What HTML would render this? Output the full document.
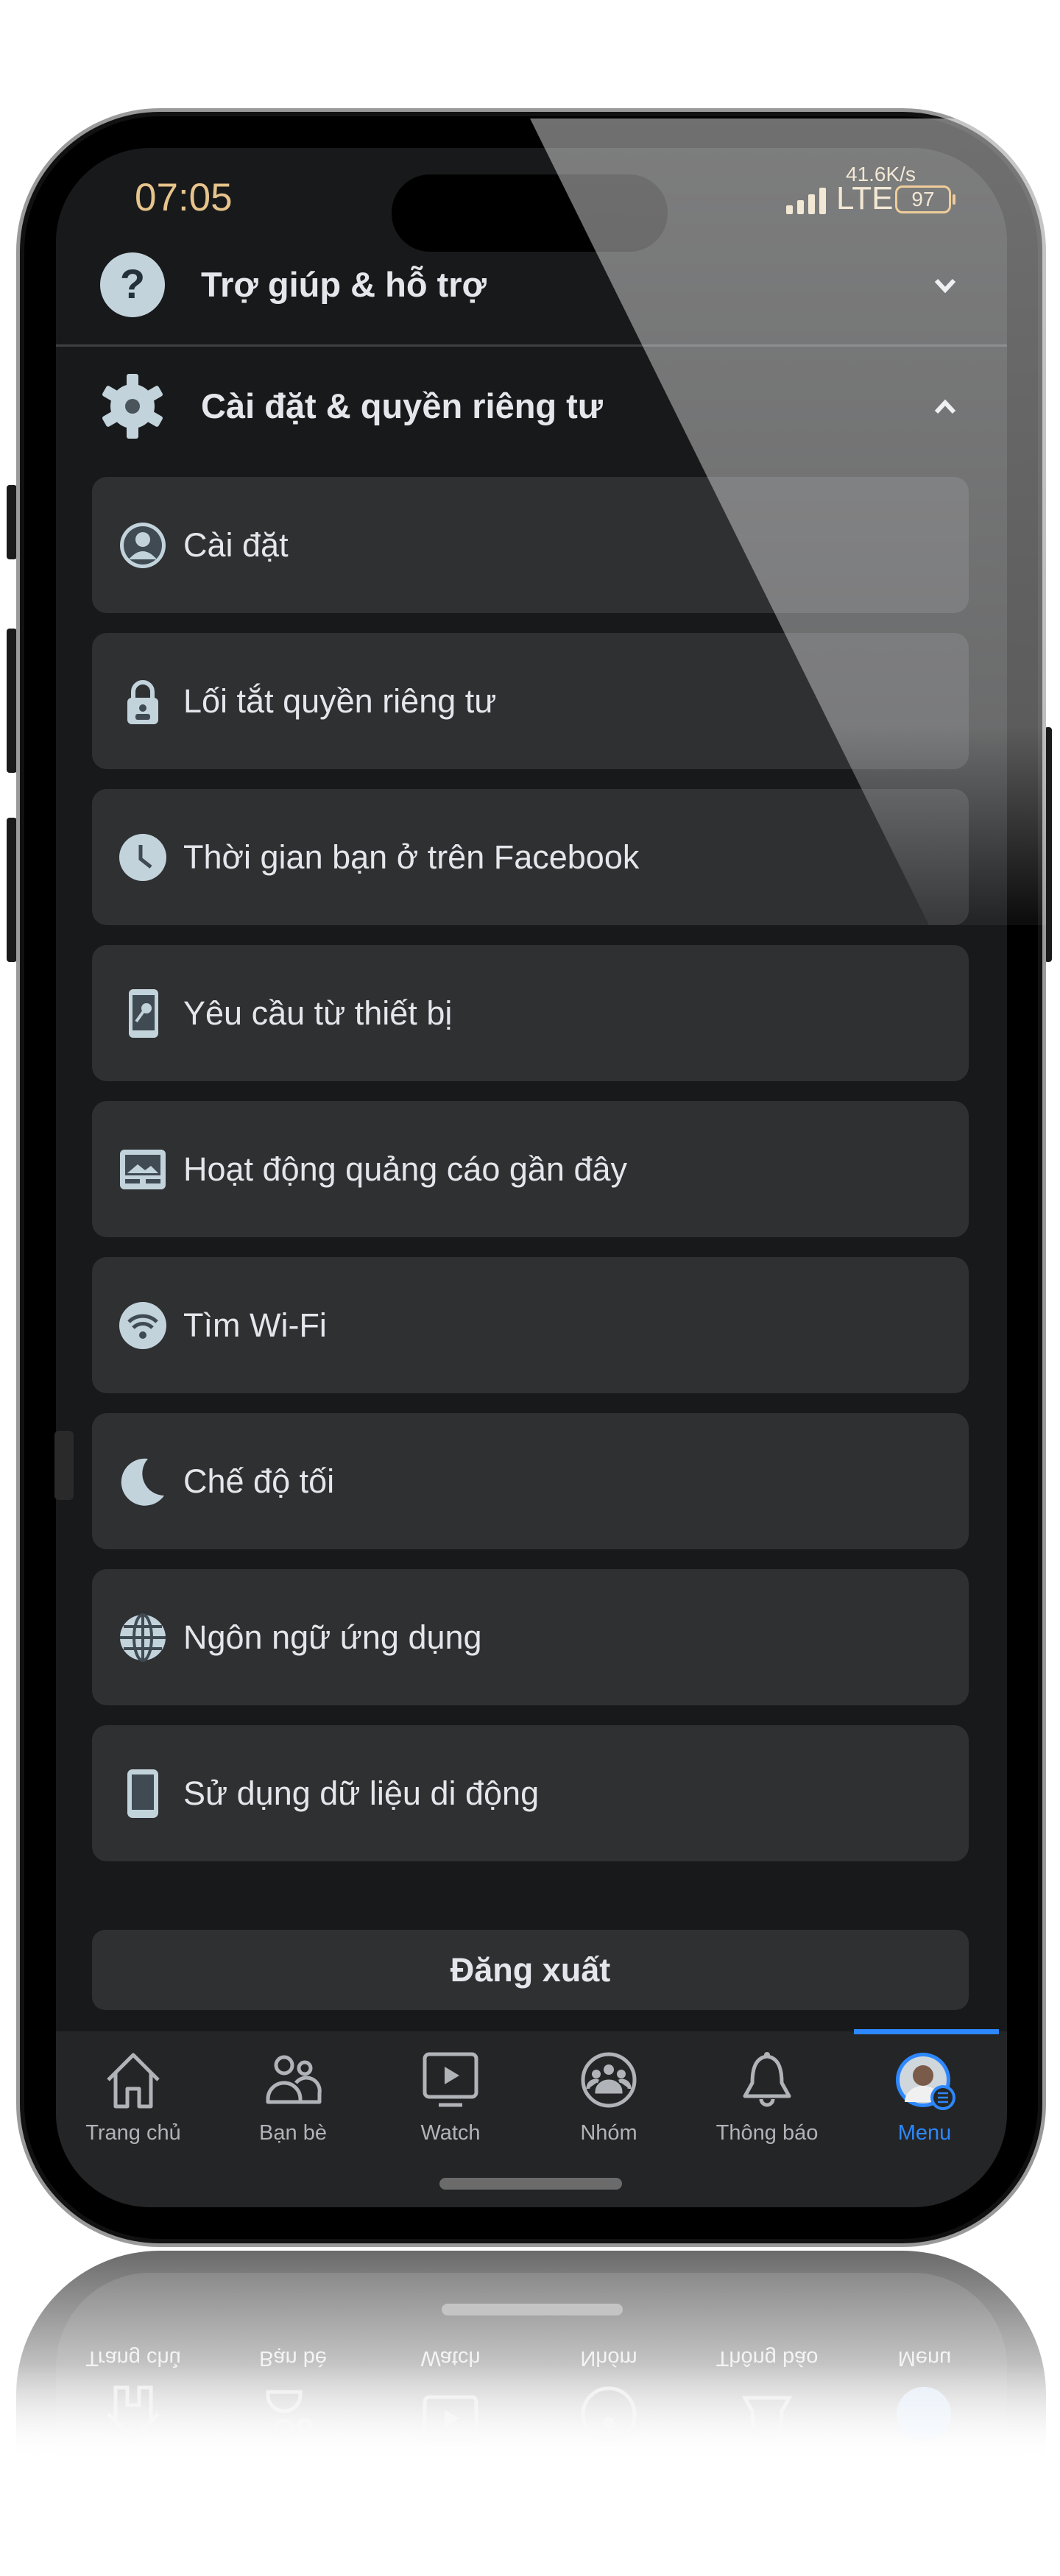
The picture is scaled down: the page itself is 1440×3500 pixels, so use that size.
<!DOCTYPE html>
<html><head><meta charset="utf-8">
<style>
*{margin:0;padding:0;box-sizing:border-box}
html,body{width:1440px;height:3500px;background:#fff;overflow:hidden;font-family:"Liberation Sans","DejaVu Sans",sans-serif}
.abs{position:absolute}
#body{left:22px;top:147px;width:1399px;height:2906px;border-radius:195px;background:#000;border:5px solid #9a9a9a;box-shadow:inset 0 0 0 6px #111;overflow:hidden}
#screen{left:76px;top:201px;width:1292px;height:2798px;border-radius:128px;background:#18191a;overflow:hidden}
.card{left:49px;width:1191px;height:185px;border-radius:20px;background:#2f3032}
.card .t{position:absolute;left:124px;top:0;line-height:185px;font-size:45px;color:#e4e6eb}
.card svg{position:absolute;left:36px;top:60px}
.hdr{font-size:47px;font-weight:bold;color:#e4e6eb;position:absolute}
.tab{position:absolute;width:200px;text-align:center;font-size:29px;color:#b0b3b8}
.tab svg{display:block;margin:0 auto 14px}
.btn{position:absolute;background:#1a1a1a;border-radius:4px}
.rt{position:absolute;width:200px;text-align:center;opacity:.25}
</style></head><body>
<!-- side buttons -->
<div class="btn" style="left:9px;top:659px;width:14px;height:101px"></div>
<div class="btn" style="left:9px;top:854px;width:14px;height:196px"></div>
<div class="btn" style="left:9px;top:1111px;width:14px;height:196px"></div>
<div class="btn" style="left:1419px;top:988px;width:10px;height:319px"></div>

<!-- reflection -->
<div class="abs" style="left:22px;top:3058px;width:1399px;height:300px;border-radius:195px 195px 0 0;background:linear-gradient(#6a6a6a,#bdbdbd 50%,#fff 95%)"></div>
<div class="abs" style="left:76px;top:3088px;width:1292px;height:270px;border-radius:128px 128px 0 0;background:linear-gradient(#8a8a8a,#cfcfcf 55%,#fff 95%)"></div>
<div class="abs" style="left:600px;top:3130px;width:246px;height:16px;border-radius:8px;background:#c4c4c4"></div>
<div class="abs" style="left:0;top:3180px;width:1440px;height:140px;transform:scaleY(-1);font-size:29px;color:#f4f4f4">
<span class="rt" style="left:81px;top:100px;opacity:1">Trang chủ</span>
<span class="rt" style="left:298px;top:100px;opacity:1">Bạn bè</span>
<span class="rt" style="left:512px;top:100px;opacity:1">Watch</span>
<span class="rt" style="left:727px;top:100px;opacity:1">Nhóm</span>
<span class="rt" style="left:942px;top:100px;opacity:1">Thông báo</span>
<span class="rt" style="left:1156px;top:100px;opacity:1">Menu</span>
<svg class="abs" style="left:141px;top:0" width="80" height="82"><path d="M6 40 L40 6 L74 40 M16 30 V76 H32 V52 H48 V76 H64 V30" stroke="#eee" stroke-width="5" fill="none"/></svg>
<svg class="abs" style="left:358px;top:0" width="80" height="82"><circle cx="28" cy="20" r="11" stroke="#eee" stroke-width="5" fill="none"/><circle cx="56" cy="24" r="8" stroke="#eee" stroke-width="5" fill="none"/><path d="M6 66 a22 22 0 0 1 44 0 V70 H6 Z" stroke="#eee" stroke-width="5" fill="none"/></svg>
<svg class="abs" style="left:572px;top:0" width="80" height="82"><rect x="5" y="5" width="70" height="58" rx="6" stroke="#eee" stroke-width="5" fill="none"/><path d="M32 22 L52 34 L32 46 Z" fill="#eee"/></svg>
<svg class="abs" style="left:787px;top:0" width="80" height="82"><circle cx="40" cy="40" r="35" stroke="#eee" stroke-width="5" fill="none"/><circle cx="40" cy="28" r="8" fill="#eee"/></svg>
<svg class="abs" style="left:1002px;top:0" width="80" height="82"><path d="M40 8 C22 10 20 30 20 44 L10 62 H70 L60 44 C60 30 58 10 40 8 Z" stroke="#eee" stroke-width="5" fill="none"/></svg>
<svg class="abs" style="left:1212px;top:0" width="90" height="82"><circle cx="43" cy="40" r="37" fill="#e6eef8"/></svg>
</div>
<div class="abs" style="left:0;top:3080px;width:1440px;height:290px;background:linear-gradient(rgba(255,255,255,0) 45%,#fff 92%)"></div>

<div id="body" class="abs"></div>
<div id="screen" class="abs">
  <!-- status -->
  <div class="abs" style="left:107px;top:37px;font-size:53px;color:#e6c48c">07:05</div>
  <div class="abs" style="left:1073px;top:20px;font-size:28px;color:#e8d6b4">41.6K/s</div>
  <svg class="abs" style="left:992px;top:52px" width="58" height="40"><rect x="0" y="26" width="9" height="12" rx="2" fill="#e8d6b4"/><rect x="15" y="19" width="9" height="19" rx="2" fill="#e8d6b4"/><rect x="30" y="11" width="9" height="27" rx="2" fill="#e8d6b4"/><rect x="45" y="2" width="9" height="36" rx="2" fill="#e8d6b4"/></svg>
  <div class="abs" style="left:1060px;top:44px;font-size:44px;color:#e8d6b4">LTE</div>
  <div class="abs" style="left:1140px;top:51px;width:76px;height:38px;border:3px solid #e3a84e;border-radius:10px;font-size:28px;color:#e8d6b4;text-align:center;line-height:32px">97</div>
  <div class="abs" style="left:1218px;top:63px;width:4px;height:14px;background:#e3a84e;border-radius:2px"></div>
  <div class="abs" style="left:456px;top:36px;width:375px;height:105px;border-radius:52px;background:#000"></div>

  <!-- help row -->
  <svg class="abs" style="left:60px;top:142px" width="88" height="88"><circle cx="44" cy="44" r="44" fill="#c2d3dc"/><text x="44" y="62" text-anchor="middle" font-size="56" font-weight="bold" fill="#25313a" font-family="Liberation Sans">?</text></svg>
  <div class="hdr" style="left:197px;top:158px">Trợ giúp &amp; hỗ trợ</div>
  <svg class="abs" style="left:1192px;top:175px" width="32" height="24"><path d="M4 5 L16 18 L28 5" stroke="#e4e6eb" stroke-width="6" fill="none"/></svg>
  <div class="abs" style="left:0;top:267px;width:1292px;height:3px;background:#3e4042"></div>
  <!-- settings header -->
  <svg class="abs" style="left:58px;top:305px" width="92" height="92" viewBox="0 0 92 92"><g fill="#c2d3dc" transform="translate(46 46)"><circle r="30"/><g id="tt"><rect x="-8" y="-44" width="16" height="20" rx="3"/></g><use href="#tt" transform="rotate(60)"/><use href="#tt" transform="rotate(120)"/><use href="#tt" transform="rotate(180)"/><use href="#tt" transform="rotate(240)"/><use href="#tt" transform="rotate(300)"/></g><circle cx="46" cy="46" r="10" fill="#4a545b"/></svg>
  <div class="hdr" style="left:197px;top:323px">Cài đặt &amp; quyền riêng tư</div>
  <svg class="abs" style="left:1192px;top:340px" width="32" height="24"><path d="M4 19 L16 6 L28 19" stroke="#e4e6eb" stroke-width="6" fill="none"/></svg>

  <!-- cards -->
  <div class="abs card" style="top:447px"><svg width="66" height="66"><circle cx="33" cy="33" r="31" fill="#c2d3dc"/><circle cx="33" cy="33" r="26" fill="#3f4a52"/><circle cx="33" cy="25" r="10" fill="#c2d3dc"/><path d="M14 52 Q33 30 52 52 Z" fill="#c2d3dc"/></svg><span class="t">Cài đặt</span></div>
  <div class="abs card" style="top:659px"><svg width="66" height="66"><path d="M20 30 V20 a13 13 0 0 1 26 0 V30" stroke="#c2d3dc" stroke-width="6" fill="none"/><rect x="12" y="28" width="42" height="36" rx="6" fill="#c2d3dc"/><circle cx="33" cy="42" r="5" fill="#3f4a52"/><rect x="23" y="50" width="20" height="8" rx="3" fill="#3f4a52"/></svg><span class="t">Lối tắt quyền riêng tư</span></div>
  <div class="abs card" style="top:871px"><svg width="66" height="66"><circle cx="33" cy="33" r="32" fill="#c2d3dc"/><path d="M30 16 V35 L44 46" stroke="#3f4a52" stroke-width="5" fill="none"/></svg><span class="t">Thời gian bạn ở trên Facebook</span></div>
  <div class="abs card" style="top:1083px"><svg width="66" height="66"><rect x="14" y="0" width="40" height="66" rx="6" fill="#c2d3dc"/><rect x="19" y="8" width="30" height="48" fill="#3f4a52"/><circle cx="38" cy="26" r="7" fill="#c2d3dc"/><path d="M34 30 L24 44" stroke="#c2d3dc" stroke-width="4"/></svg><span class="t">Yêu cầu từ thiết bị</span></div>
  <div class="abs card" style="top:1295px"><svg width="66" height="66"><rect x="2" y="6" width="62" height="54" rx="6" fill="#c2d3dc"/><rect x="9" y="13" width="48" height="28" fill="#3f4a52"/><path d="M12 38 L26 26 L36 34 L44 28 L54 38 Z" fill="#c2d3dc"/><rect x="9" y="46" width="20" height="6" fill="#3f4a52"/><rect x="37" y="46" width="20" height="6" fill="#3f4a52"/></svg><span class="t">Hoạt động quảng cáo gần đây</span></div>
  <div class="abs card" style="top:1507px"><svg width="66" height="66"><circle cx="33" cy="33" r="32" fill="#c2d3dc"/><path d="M14 28 a27 27 0 0 1 38 0 M20 36 a18 18 0 0 1 26 0" stroke="#3f4a52" stroke-width="5" fill="none"/><circle cx="33" cy="46" r="5" fill="#3f4a52"/></svg><span class="t">Tìm Wi-Fi</span></div>
  <div class="abs card" style="top:1719px"><svg width="66" height="66"><path d="M40 2 A32 32 0 1 0 62 52 A30 30 0 0 1 40 2 Z" fill="#c2d3dc"/></svg><span class="t">Chế độ tối</span></div>
  <div class="abs card" style="top:1931px"><svg width="66" height="66"><circle cx="33" cy="33" r="31" fill="#c2d3dc"/><g stroke="#3f4a52" stroke-width="4" fill="none"><ellipse cx="33" cy="33" rx="12" ry="31"/><path d="M33 2 V64 M2 33 H64 M7 18 H59 M7 48 H59"/></g></svg><span class="t">Ngôn ngữ ứng dụng</span></div>
  <div class="abs card" style="top:2143px"><svg width="66" height="66"><rect x="12" y="0" width="42" height="66" rx="7" fill="#c2d3dc"/><rect x="18" y="7" width="30" height="48" fill="#3f4a52"/></svg><span class="t">Sử dụng dữ liệu di động</span></div>

  <!-- logout -->
  <div class="abs" style="left:49px;top:2421px;width:1191px;height:109px;border-radius:18px;background:#2f3032;text-align:center;line-height:109px;font-size:45px;font-weight:bold;color:#e4e6eb">Đăng xuất</div>

  <!-- tab bar -->
  <div class="abs" style="left:0;top:2559px;width:1292px;height:240px;background:#242526"></div>
  <div class="abs" style="left:1084px;top:2556px;width:197px;height:7px;background:#2d88ff"></div>
  <div class="tab" style="left:5px;top:2585px"><svg width="80" height="82"><path d="M6 40 L40 6 L74 40 M16 30 V76 H32 V52 H48 V76 H64 V30" stroke="#b0b3b8" stroke-width="5" fill="none" stroke-linejoin="round"/></svg>Trang chủ</div>
  <div class="tab" style="left:222px;top:2585px"><svg width="80" height="82"><circle cx="28" cy="20" r="11" stroke="#b0b3b8" stroke-width="5" fill="none"/><circle cx="56" cy="24" r="8" stroke="#b0b3b8" stroke-width="5" fill="none"/><path d="M6 66 a22 22 0 0 1 44 0 V70 H6 Z M44 44 a18 18 0 0 1 32 14 V70 H50" stroke="#b0b3b8" stroke-width="5" fill="none" stroke-linejoin="round"/></svg>Bạn bè</div>
  <div class="tab" style="left:436px;top:2585px"><svg width="80" height="82"><rect x="5" y="5" width="70" height="58" rx="6" stroke="#b0b3b8" stroke-width="5" fill="none"/><path d="M32 22 L52 34 L32 46 Z" fill="#b0b3b8"/><path d="M24 74 H56" stroke="#b0b3b8" stroke-width="5"/></svg>Watch</div>
  <div class="tab" style="left:651px;top:2585px"><svg width="80" height="82"><circle cx="40" cy="40" r="35" stroke="#b0b3b8" stroke-width="5" fill="none"/><circle cx="40" cy="26" r="7" fill="#b0b3b8"/><circle cx="23" cy="32" r="6" fill="#b0b3b8"/><circle cx="57" cy="32" r="6" fill="#b0b3b8"/><path d="M24 56 a16 14 0 0 1 32 0 Z M12 52 a10 10 0 0 1 14 -10 M68 52 a10 10 0 0 0 -14 -10" fill="#b0b3b8" stroke="#b0b3b8" stroke-width="5"/></svg>Nhóm</div>
  <div class="tab" style="left:866px;top:2585px"><svg width="80" height="82"><path d="M40 8 C22 10 20 30 20 44 L10 62 H70 L60 44 C60 30 58 10 40 8 Z M32 66 a8 8 0 0 0 16 0" stroke="#b0b3b8" stroke-width="5" fill="none" stroke-linejoin="round"/><circle cx="40" cy="6" r="4" fill="#b0b3b8"/></svg>Thông báo</div>
  <div class="tab" style="left:1080px;top:2585px;color:#2d88ff"><svg width="90" height="82"><circle cx="43" cy="40" r="37" fill="#2d88ff"/><circle cx="43" cy="40" r="32" fill="#cfd6dc"/><circle cx="43" cy="34" r="14" fill="#7a5a48"/><path d="M18 70 a25 22 0 0 1 50 0" fill="#f0f0f0"/><circle cx="70" cy="64" r="17" fill="#2d88ff"/><circle cx="70" cy="64" r="13" fill="#242526"/><path d="M63 58 H77 M63 64 H77 M63 70 H77" stroke="#2d88ff" stroke-width="2.5"/></svg>Menu</div>
  <div class="abs" style="left:521px;top:2758px;width:248px;height:16px;border-radius:8px;background:#6b6b6b"></div>
</div>
<!-- small left tab -->
<div class="abs" style="left:74px;top:1944px;width:26px;height:94px;border-radius:6px;background:#2a2a2a"></div>
<!-- glare -->
<div class="abs" style="left:22px;top:147px;width:1399px;height:2906px;border-radius:195px;overflow:hidden;pointer-events:none">
  <div class="abs" style="left:0;top:0;width:1399px;height:1200px;clip-path:polygon(698px 14px,1399px 14px,1399px 1110px,1240px 1110px);background:linear-gradient(rgba(255,255,255,0.44),rgba(255,255,255,0.36) 70%,rgba(255,255,255,0.05) 92%)"></div>
</div>
</body></html>
